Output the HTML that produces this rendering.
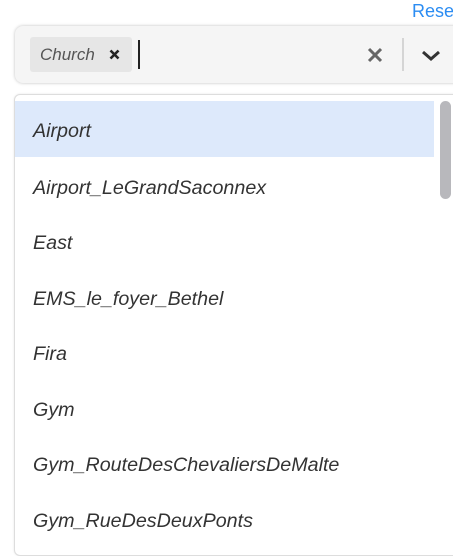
<!DOCTYPE html>
<html><head><style>
body{margin:0;width:453px;height:546px;overflow:hidden;background:#fff;font-family:"Liberation Sans",sans-serif;position:relative}
.reset{position:absolute;left:412px;top:1px;color:#2b8cf2;font-size:18px}
.box{position:absolute;left:15px;top:26px;width:460px;height:57px;background:#f5f5f5;border-radius:8px;box-shadow:0 0 3px rgba(0,0,0,.25)}
.tag{position:absolute;left:30px;top:37px;width:102px;height:35px;background:#e6e6e6;border-radius:3px}
.tag span{position:absolute;left:10px;top:8px;font-style:italic;font-size:17px;color:#555}
.cur{position:absolute;left:138px;top:40px;width:1.5px;height:29px;background:#222}
.div{position:absolute;left:402px;top:38px;width:2px;height:33px;background:#d5d5d5}
.panel{position:absolute;left:14px;top:94px;width:460px;height:460px;border:1px solid #ddd;border-radius:6px;background:#fff;box-shadow:0 0 2px rgba(0,0,0,.1)}
.item{position:absolute;left:15px;width:419px;height:56px;font-style:italic;font-size:19.7px;color:#333;line-height:60px;padding-left:18px;box-sizing:border-box;overflow:hidden}
.hl{background:#dde9fb}
.sb{position:absolute;left:440px;top:101px;width:11px;height:98px;background:#b8b8bc;border-radius:6px}
</style></head><body>
<div class="reset">Reset</div>
<div class="box"></div>
<div class="tag"><span>Church</span>
<svg style="position:absolute;left:79px;top:12px" width="11" height="11" viewBox="0 0 11 11"><path d="M1.5 1.5L9.5 9.5M9.5 1.5L1.5 9.5" stroke="#222" stroke-width="2.6"/></svg></div>
<div class="cur"></div>
<svg style="position:absolute;left:367px;top:47px" width="16" height="16" viewBox="0 0 16 16"><path d="M2 2L14 14M14 2L2 14" stroke="#666" stroke-width="3"/></svg>
<div class="div"></div>
<svg style="position:absolute;left:421px;top:49px" width="20" height="13" viewBox="0 0 20 13"><path d="M2 3L10 10L18 3" stroke="#333" stroke-width="3" fill="none"/></svg>
<div class="panel"></div>
<div class="item hl" style="top:101px">Airport</div>
<div class="item" style="top:158px;overflow:visible">Airport_LeGrandSaconnex</div>
<div class="item" style="top:213px">East</div>
<div class="item" style="top:269px">EMS_le_foyer_Bethel</div>
<div class="item" style="top:324px">Fira</div>
<div class="item" style="top:380px">Gym</div>
<div class="item" style="top:435px">Gym_RouteDesChevaliersDeMalte</div>
<div class="item" style="top:491px">Gym_RueDesDeuxPonts</div>
<div class="sb"></div>
</body></html>
